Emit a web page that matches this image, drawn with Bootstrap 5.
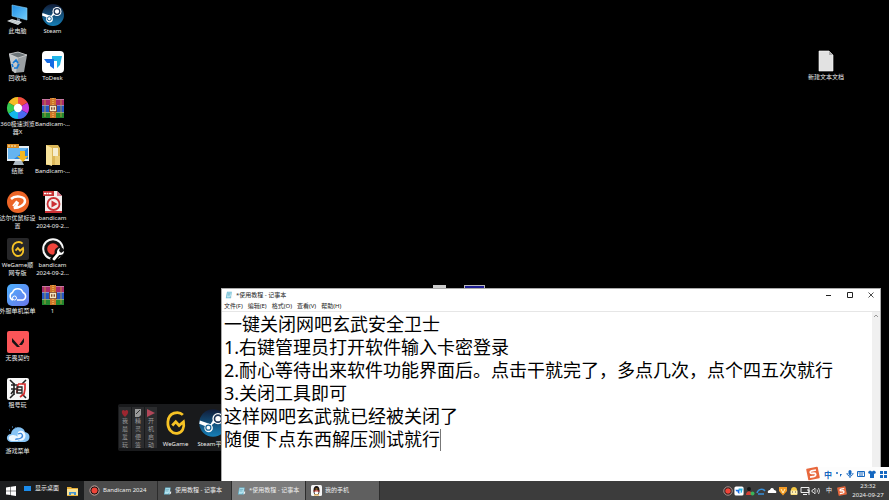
<!DOCTYPE html>
<html lang="zh-CN">
<head>
<meta charset="utf-8">
<meta name="viewport" content="width=device-width, initial-scale=1">
<title>桌面</title>
<link href="https://cdn.jsdelivr.net/npm/bootstrap@5.3.0/dist/css/bootstrap.min.css" rel="stylesheet">
<style>
  body { background: #000; color: #fff; font: 6px/7px "Noto Sans", "Noto Sans CJK SC", sans-serif; }
  svg { display: block; flex: none; }
  button { font: inherit; color: inherit; background: none; border: 0; padding: 0; }
  .desktop { min-height: 0; }
  .shortcuts { display: grid; grid-auto-flow: column; grid-template-rows: repeat(10, minmax(0, 1fr)); grid-auto-columns: 35px; height: 100%; padding: 3px 0 11px; width: max-content; }
  .shortcut { color: #eee; white-space: nowrap; line-height: 8px; text-align: center; text-decoration: none; }
  .shortcut svg { width: 24px; height: 24px; }
  .lone { top: 49px; right: 45px; }
  .dock { left: 118px; bottom: 30px; width: 160px; height: 47px; background: #191a1c; border-radius: 2px; padding: 3px 0 3px 1px; }
  .dock-tabs { gap: 1px; }
  .dock-tab { width: 12px; background: #2b2c2e; color: #999; padding: 2px 3px 0; line-height: 8px; word-break: break-all; }
  .dock .shortcut { width: 37px; }
  .dock .shortcut svg { width: 30px; height: 30px; margin: 1px 0 2px; }
  .peek { bottom: 192px; height: 4px; }
  .peek-file { left: 433px; width: 13px; background: #ccc; }
  .peek-app { left: 464px; width: 21px; background: #1c1c90; border: 1px solid #bbb; }
  .notepad { left: 221px; right: 8px; bottom: 0; height: 193px; background: #fff; color: #222; border: 1px solid #aaa; border-bottom: 0; }
  .titlebar { height: 12px; padding-left: 3px; gap: 3px; }
  .win-btn { width: 18px; height: 12px; }
  .menus { height: 10px; gap: 5px; padding-left: 2px; color: #222; }
  .editor { border-top: 1px solid #e6e6e6; }
  .editor textarea { border: 0; outline: 0; resize: none; overflow: hidden; background: #fff; color: #000; font-family: "Noto Sans", "Noto Sans CJK SC", sans-serif; font-size: 18px; line-height: 23px; padding: 1px 2px; }
  .caret { left: 218px; top: 117px; width: 1px; height: 22px; background: #777; }
  .scroller { width: 8px; background: #f0f0f0; }
  .ime { right: 0; bottom: 0; height: 14px; background: #fdfdfd; color: #1467c0; padding: 0 2px 0 18px; gap: 3px; font-size: 8px; font-weight: 700; }
  .ime-logo { left: 0; bottom: 0; }
  .taskbar { height: 19px; background: #3c3c3c; color: #eee; }
  .launch { width: 84px; background: #1d1e1f; padding-left: 6px; }
  .task { width: 74px; padding-left: 5px; gap: 3px; background: #4b4b4b; border-right: 1px solid #2c2c2c; white-space: nowrap; }
  .task.current { background: #7c7c7c; }
  .task.lit { background: #5f5f5f; }
  .tray { gap: 1px; }
  .clock { width: 42px; line-height: 9px; text-align: center; }
</style>
<script src="https://cdn.jsdelivr.net/npm/bootstrap@5.3.0/dist/js/bootstrap.bundle.min.js"></script>
</head>
<body class="vh-100 d-flex flex-column overflow-hidden">

<svg width="0" height="0" class="position-absolute" aria-hidden="true">
  <defs>
    <linearGradient id="blue" x1="0" y1="0" x2="1" y2="1"><stop stop-color="#1f8ee6"/><stop offset="1" stop-color="#72cdfa"/></linearGradient>
    <linearGradient id="navy" x1="0" y1="0" x2="0" y2="1"><stop stop-color="#101c38"/><stop offset="1" stop-color="#1680b8"/></linearGradient>
    <linearGradient id="cloudbg" x1="0" y1="0" x2="1" y2="1"><stop stop-color="#4cb1ff"/><stop offset="1" stop-color="#6a76e8"/></linearGradient>
  </defs>
  <symbol id="steam" viewBox="0 0 24 24">
    <circle cx="12" cy="12" r="11" fill="url(#navy)"/>
    <path d="M1 12.5 8.5 15.500 13 12 18 10 15 5 10 13 1.500 10z" fill="#fff"/>
    <circle cx="16" cy="8.500" r="4.500" fill="#fff"/><circle cx="16" cy="8.500" r="2.800" fill="none" stroke="#1c3557" stroke-width="1.300"/>
    <circle cx="8.500" cy="16" r="3.400" fill="#fff"/><circle cx="8.300" cy="15.700" r="2" fill="none" stroke="#1b6696"/>
  </symbol>
  <symbol id="rar" viewBox="0 0 24 24">
    <path d="M1 3h22v6H1z" fill="#a92a6a"/><path d="M1 9h22v7H1z" fill="#2456c4"/><path d="M1 16h22v6H1z" fill="#22862f"/>
    <path d="M1 3h22v1H1zM1 9h22v1H1zM1 16h22v1H1z" fill="#e7c4d8" opacity=".5"/>
    <path d="M4 4v17M20 4v17" stroke="#c9a53b" stroke-width=".8"/>
    <path d="M9 2h6v20H9z" fill="#cf762a"/><path d="M12 2v20" stroke="#f6d773" stroke-dasharray="1 1"/>
    <path d="M8 9h8v7H8z" fill="#70351b"/><path d="M9.500 10.500h5v4h-5zM12 10v5" fill="none" stroke="#f3e6c2" stroke-width="1.300"/>
  </symbol>
  <symbol id="wegame" viewBox="0 0 24 24">
    <path d="M17.500 5.500C14 2 6 3.500 5.500 11c-.4 6 3.500 10 7.500 9.300 4-.6 6-4.500 5-9.300l-3.500 3-2.700-3-2.800 3" fill="none" stroke="#f7c325" stroke-width="2.200"/>
  </symbol>
  <symbol id="note" viewBox="0 0 10 10">
    <path d="M2.500 1h6L7.500 9H1z" fill="#69b9d2"/><path d="M3 2h5l-.5 4-2 2H2z" fill="#b6e4ef"/><path d="M3 3.500h4M3 5h3" stroke="#3f8da8" stroke-width=".6"/><path d="M7 7 9 5v2.500L7.500 9z" fill="#eee"/>
  </symbol>
  <symbol id="sogou" viewBox="0 0 14 14">
    <path d="m1 3 10-2 2 10-10 2z" fill="#e8683d" stroke="#e8683d" stroke-width="1.500" stroke-linejoin="round"/>
    <path d="M10 3.500 5.500 4.300c-2 .5-1.500 2.600.2 2.500l2.500-.2c2 0 2 2.700.2 3.200L4 10.600" fill="none" stroke="#fff" stroke-width="1.700"/>
  </symbol>
  <symbol id="rec" viewBox="0 0 12 12"><circle cx="6" cy="6" r="5" fill="#141414" stroke="#d9b3ae"/><circle cx="6" cy="6" r="3.300" fill="#f04438"/></symbol>
  <symbol id="todesk" viewBox="0 0 24 24"><rect x="1" y="1" width="22" height="22" rx="4" fill="#fff"/><path d="M11 6h10l-2 9-3 3v-7h-5z" fill="#22b6e8"/><path d="M3 9h10v10l-4-3v-3H6z" fill="#156be3"/></symbol>
</svg>

<main class="desktop position-relative flex-grow-1">
  <nav class="shortcuts" aria-label="桌面图标">
    <a class="shortcut d-flex flex-column align-items-center" href="#"><svg viewBox="0 0 24 24"><path d="m6 2 15 3v12L6 13z" fill="url(#blue)" stroke="#8bd0f4" stroke-width=".6"/><path d="m11 15 3 1v3h-3z" fill="#678"/><path d="m1 18 5-2 10 3-4 3z" fill="#e4e7ea"/><path d="m3 18 10 3M5 17l9 3" stroke="#9aa" stroke-width=".6"/></svg>此电脑</a>
    <a class="shortcut d-flex flex-column align-items-center" href="#"><svg viewBox="0 0 24 24"><path d="m3 4 9-2 9 3-3 17-10 1z" fill="#9a9fa2"/><path d="m3 4 9 3-2 16-4-2z" fill="#c4c8ca"/><path d="m3 4 9-2 9 3-9 3z" fill="#6c7478" stroke="#ddd" stroke-width=".7"/><path d="m7 13 3-3 2 3m1 1-2 4H8m-1-1-1-3" fill="none" stroke="#1679d4" stroke-width="1.700"/></svg>回收站</a>
    <a class="shortcut d-flex flex-column align-items-center" href="#"><svg viewBox="0 0 24 24"><g fill="none" stroke-width="7"><path d="M12 4.500a7.500 7.500 0 0 1 6.500 3.800" stroke="#f14d3f"/><path d="M18.500 8.300a7.500 7.500 0 0 1 0 7.500" stroke="#c63adb"/><path d="M18.500 15.700A7.500 7.500 0 0 1 12 19.500" stroke="#4a69ef"/><path d="M12 19.500a7.500 7.500 0 0 1-6.500-3.800" stroke="#13b8e9"/><path d="M5.500 15.700a7.500 7.500 0 0 1 0-7.500" stroke="#34c950"/><path d="M5.500 8.300A7.500 7.500 0 0 1 12 4.500" stroke="#f6bd25"/></g><circle cx="12" cy="12" r="4.200" fill="#fff"/></svg>360极速浏览<br>器X</a>
    <a class="shortcut d-flex flex-column align-items-center" href="#"><svg viewBox="0 0 24 24"><path d="M1 3h22v15H1z" fill="#e6edf2"/><path d="M2 5h20v11H2z" fill="#2d86dd"/><path d="M2 5h20L8 16H2z" fill="#65b4f0"/><path d="M1 1h12v4H1z" fill="#d98c24"/><path d="M2 3h9" stroke="#fff2c2" stroke-dasharray="2 1"/><path d="M9 18h7l2 4H7z" fill="#abb8c2"/><path d="M14 8h5v5h3l-5 6-6-6h3z" fill="#f2b823"/></svg>结账</a>
    <a class="shortcut d-flex flex-column align-items-center" href="#"><svg viewBox="0 0 24 24"><circle cx="12" cy="12" r="11" fill="#ec6527"/><path d="M5 9c4-4 14-3 14 2 0 4-6 7-11 7 2-1 3-3 4-6" fill="none" stroke="#fff" stroke-width="2.500"/><path d="m7 16 4-5" stroke="#fff" stroke-width="2"/></svg>达尔优鼠标设<br>置</a>
    <a class="shortcut d-flex flex-column align-items-center" href="#"><svg viewBox="0 0 24 24"><rect x="1" y="1" width="22" height="22" rx="2" fill="#272729"/><use href="#wegame" x="2" y="2" width="20" height="20"/></svg>WeGame顺<br>网专版</a>
    <a class="shortcut d-flex flex-column align-items-center" href="#"><svg viewBox="0 0 24 24"><rect x="1" y="1" width="22" height="22" rx="5" fill="url(#cloudbg)"/><path d="M7 17a4 4 0 0 1-.5-7.500 5.500 5.500 0 0 1 10.500 0 4 4 0 0 1 0 7.500h-6" fill="none" stroke="#fff" stroke-width="1.500"/><circle cx="8.500" cy="15" r="2" fill="none" stroke="#fff"/></svg>外服单机菜单</a>
    <a class="shortcut d-flex flex-column align-items-center" href="#"><svg viewBox="0 0 24 24"><rect x="1" y="1" width="22" height="22" rx="2" fill="#fb5558"/><path d="m6 8 8 9h-3l-5-5zM18 8v4l-2 3h-3z" fill="#151414"/></svg>无畏契约</a>
    <a class="shortcut d-flex flex-column align-items-center" href="#"><svg viewBox="0 0 24 24"><rect x="1" y="1" width="22" height="22" rx="2" fill="#f8f8f8"/><path d="m4 3 4 4M20 3l-4 4M8 17l-4 4M16 17l4 4M5 8h6M8 6v12M5 12h6M5 17l3-4" fill="none" stroke="#222" stroke-width="1.600"/><path d="M12 7h7v5l-1 5-4 3M12 7l-1 9" fill="none" stroke="#d52d2d" stroke-width="1.700"/><path d="M11 10h5v6h-5zM11 13h5" fill="none" stroke="#222" stroke-width="1.300"/></svg>租号玩</a>
    <a class="shortcut d-flex flex-column align-items-center" href="#"><svg viewBox="0 0 24 24"><path d="M5 19C-1 18 0 11 5 11c1-8 12-9 14-2 6 1 6 9 0 10z" fill="#86c3f4"/><path d="M6 18c-5-1-4-6 1-6 4 0 6 3 5 6zM12 9c5-4 9 2 7 6s-7 3-8 1" fill="#eef8ff"/><path d="M12 11c4-2 6 2 3 4s-6 0-5 2" fill="none" stroke="#3a87db" stroke-width="1.300"/><path d="M3 7h1M6 4h1M9 5h1" stroke="#5aa5e4"/></svg>游戏菜单</a>
    <a class="shortcut d-flex flex-column align-items-center" href="#"><svg><use href="#steam"/></svg>Steam</a>
    <a class="shortcut d-flex flex-column align-items-center" href="#"><svg><use href="#todesk"/></svg>ToDesk</a>
    <a class="shortcut d-flex flex-column align-items-center" href="#"><svg><use href="#rar"/></svg>Bandicam-...</a>
    <a class="shortcut d-flex flex-column align-items-center" href="#"><svg viewBox="0 0 24 24"><path d="M5 2h12l2 3v17H5z" fill="#dcb758"/><path d="m5 2 6 3v18l-6-2z" fill="#f8e39b"/><path d="M12 5h5v8h-5z" fill="#f5edcf"/><path d="M14 13h5v9h-5z" fill="#eccd76"/></svg>Bandicam-...</a>
    <a class="shortcut d-flex flex-column align-items-center" href="#"><svg viewBox="0 0 24 24"><path d="M4 1h12l5 5v17H4z" fill="#f3eeee"/><path d="M2 1h11v5H2z" fill="#c52f31"/><path d="M3 3.500h8" stroke="#fff" stroke-width="1.500" stroke-dasharray="2 .5"/><path d="M16 1v5h5z" fill="#d78"/><circle cx="12.500" cy="14" r="6" fill="none" stroke="#cb3035" stroke-width="1.800"/><path d="m10.500 10.500 6 3.500-6 3.500z" fill="#cb3035"/><path d="M4 21h17v2H4z" fill="#cb3035"/></svg>bandicam<br>2024-09-2...</a>
    <a class="shortcut d-flex flex-column align-items-center" href="#"><svg viewBox="0 0 24 24"><circle cx="12" cy="12" r="9.800" fill="#111" stroke="#f7f7f7" stroke-width="2"/><circle cx="12" cy="12" r="5.800" fill="#f0453c"/><path d="m11 24 7-8" stroke="#000" stroke-width="6"/><circle cx="18.500" cy="15" r="5" fill="#111"/><path d="m13 22 5-6" stroke="#fff" stroke-width="2.800" stroke-linecap="round"/><path d="M19 11c-4 1-4 7 0 7 2 0 4-1 4-4l-3 2-2-2z" fill="#fff"/></svg>bandicam<br>2024-09-2...</a>
    <a class="shortcut d-flex flex-column align-items-center" href="#"><svg><use href="#rar"/></svg>1</a>
  </nav>

  <a class="shortcut lone position-absolute d-flex flex-column align-items-center" href="#"><svg viewBox="0 0 24 24"><path d="M5 2h10l4 4v16H5z" fill="#e2e2e2" stroke="#fff" stroke-width=".6"/><path d="M15 2v4h4z" fill="#aaa"/></svg>新建文本文档</a>

  <section class="dock position-absolute d-flex" aria-label="快捷栏">
    <div class="dock-tabs d-flex">
      <button class="dock-tab d-flex flex-column align-items-center" type="button"><svg width="8" height="8" viewBox="0 0 8 8"><path d="M4 8C-2 3 2-1 4 2c2-3 6 1 0 6" fill="#9c2630"/></svg>我最爱玩</button>
      <button class="dock-tab d-flex flex-column align-items-center" type="button"><svg width="8" height="8" viewBox="0 0 8 8"><path d="M1 0h6v6L5 8H1z" fill="#999"/><path d="m2 5 4-4" stroke="#333"/></svg>精灵便签</button>
      <button class="dock-tab d-flex flex-column align-items-center" type="button"><svg width="8" height="8" viewBox="0 0 8 8"><path d="m0 0 8 4-8 4z" fill="#b04759"/></svg>开机启动</button>
    </div>
    <a class="shortcut d-flex flex-column align-items-center" href="#"><svg><use href="#wegame"/></svg>WeGame</a>
    <a class="shortcut d-flex flex-column align-items-center" href="#"><svg><use href="#steam"/></svg>Steam平台</a>
  </section>

  <div class="peek peek-file position-absolute"></div>
  <div class="peek peek-app position-absolute"></div>

  <section class="notepad position-absolute d-flex flex-column" aria-label="记事本">
    <header class="titlebar d-flex align-items-center">
      <svg width="8" height="8"><use href="#note"/></svg>
      <span class="me-auto">*使用教程 - 记事本</span>
      <button class="win-btn d-flex align-items-center justify-content-center" type="button" aria-label="最小化"><svg width="6" height="6" viewBox="0 0 6 6"><path d="M0 3.500h5" stroke="#222"/></svg></button>
      <button class="win-btn d-flex align-items-center justify-content-center" type="button" aria-label="最大化"><svg width="6" height="6" viewBox="0 0 6 6"><path d="M.5.500h5v5h-5z" fill="none" stroke="#222"/></svg></button>
      <button class="win-btn d-flex align-items-center justify-content-center" type="button" aria-label="关闭"><svg width="6" height="6" viewBox="0 0 6 6"><path d="m.5.500 5 5m0-5-5 5" stroke="#222" stroke-width=".8"/></svg></button>
    </header>
    <nav class="menus d-flex align-items-center">
      <button type="button">文件(F)</button><button type="button">编辑(E)</button><button type="button">格式(O)</button><button type="button">查看(V)</button><button type="button">帮助(H)</button>
    </nav>
    <div class="editor position-relative flex-grow-1 d-flex">
      <textarea class="flex-grow-1" aria-label="文本" spellcheck="false">一键关闭网吧玄武安全卫士
1.右键管理员打开软件输入卡密登录
2.耐心等待出来软件功能界面后。点击干就完了，多点几次，点个四五次就行
3.关闭工具即可
这样网吧玄武就已经被关闭了
随便下点东西解压测试就行</textarea>
      <span class="caret position-absolute"></span>
      <div class="scroller d-flex justify-content-center"><svg width="6" height="8" viewBox="0 0 6 8"><path d="m1 5 2-2 2 2" fill="none" stroke="#999"/></svg></div>
    </div>
  </section>

  <div class="ime position-absolute d-flex align-items-center" aria-label="输入法">
    <svg class="ime-logo position-absolute" width="14" height="15"><use href="#sogou"/></svg>
    <span>中</span>
    <svg width="8" height="8" viewBox="0 0 8 8"><circle cx="2" cy="3" r="1" fill="#1467c0"/><path d="M5 4h2L5 7z" fill="#1467c0"/></svg>
    <svg width="8" height="8" viewBox="0 0 8 8"><rect x="2.500" width="3" height="5" rx="1.500" fill="#1467c0"/><path d="M1 3c0 4 6 4 6 0M4 6v2" fill="none" stroke="#1467c0"/></svg>
    <svg width="8" height="8" viewBox="0 0 8 8"><path d="M.5 1.500h7v5h-7zM1.500 3h5M2 5h4" fill="none" stroke="#1467c0"/></svg>
    <svg width="8" height="8" viewBox="0 0 8 8"><path d="m0 2 2-1.500 2 1 2-1L8 2 7 4 6 3.500V8H2V3.500L1 4z" fill="#1467c0"/></svg>
    <svg width="8" height="8" viewBox="0 0 8 8"><path d="M1 1h3v3H1zM5 1h3v3H5zM1 5h3v3H1zM5 5h3v3H5z" fill="#1467c0"/></svg>
  </div>
</main>

<footer class="taskbar d-flex flex-shrink-0">
  <div class="launch d-flex align-items-center flex-shrink-0">
    <button type="button" aria-label="开始"><svg width="10" height="10" viewBox="0 0 10 10"><path d="m0 1.500 4.500-.7v3.900H0zM5 .7 10 0v4.700H5zM0 5.200h4.500v3.900L0 8.500zM5 5.200h5V10l-5-.8z" fill="#fff"/></svg></button>
    <button class="d-flex align-items-center gap-1 ms-2 mb-1" type="button"><svg width="7" height="6" viewBox="0 0 7 6"><path d="M0 0h7v5H0z" fill="#1b8cec"/></svg>显示桌面</button>
    <button class="ms-2" type="button" aria-label="文件资源管理器"><svg width="11" height="10" viewBox="0 0 11 10"><path d="M0 1h4l1 1h6v8H0z" fill="#e5ae37"/><path d="M0 3h11v6H0z" fill="#fbe294"/><path d="M2 9V6h7v3H7V7.500H4V9z" fill="#4392cf"/></svg></button>
  </div>
  <button class="task d-flex align-items-center" type="button"><svg width="11" height="11"><use href="#rec"/></svg>Bandicam 2024</button>
  <button class="task d-flex align-items-center" type="button"><svg width="9" height="10"><use href="#note"/></svg>使用教程 - 记事本</button>
  <button class="task current d-flex align-items-center" type="button"><svg width="9" height="10"><use href="#note"/></svg>*使用教程 - 记事本</button>
  <button class="task lit d-flex align-items-center me-auto" type="button"><svg width="11" height="11" viewBox="0 0 11 11"><rect width="11" height="11" rx="1.500" fill="#f5f5f5"/><ellipse cx="5.500" cy="5.500" rx="3" ry="4.500" fill="#1c1515"/><ellipse cx="5.500" cy="7.500" rx="2" ry="2.300" fill="#fff"/><path d="M2.500 5.500h6v1h-6z" fill="#d3342b"/><path d="M3 10h5M4.500 4h2" stroke="#e9a02b"/></svg>我的手机</button>
  <div class="tray d-flex align-items-center" aria-label="通知区域">
    <svg width="10" height="10"><use href="#rec"/></svg>
    <svg width="10" height="10"><use href="#todesk"/></svg>
    <svg width="10" height="10" viewBox="0 0 10 10"><circle cx="4" cy="3" r="2" fill="#151515"/><path d="M1 9c0-5 6-5 6 0z" fill="#d43f32"/><circle cx="7.500" cy="7.500" r="2" fill="#38b45a"/></svg>
    <svg width="10" height="10" viewBox="0 0 10 10"><path d="M1 7c1-4 6-5 8-2M2 8h6" fill="none" stroke="#3990d9" stroke-width="1.500"/></svg>
    <svg width="10" height="10" viewBox="0 0 10 10"><path d="M1 7c-1-3 2-3 2-3 1-3 4-2 4 0 2 0 3 2 2 3z" fill="#fff"/></svg>
    <svg width="10" height="10" viewBox="0 0 10 10"><path d="M1 1h8v4L5 9.500 1 5z" fill="#f39a24"/><path d="m3 3 2 4 2-4" fill="none" stroke="#fff0bb"/></svg>
    <svg width="10" height="10" viewBox="0 0 10 10"><path d="M2 9V4c0-4 6-4 6 0v5z" fill="#f5c843"/><path d="M1.500 4.500h7v4h-7z" fill="#fff0b0"/><path d="M3 6h1m2 0h1" stroke="#654"/></svg>
    <svg width="10" height="10" viewBox="0 0 10 10"><path d="M1 1.500h8v5H1zM3 8.500h4M7 4h2v5" fill="none" stroke="#eee"/></svg>
    <svg width="10" height="10" viewBox="0 0 10 10"><path d="M1 4h1l2-2v6L2 6H1zM6 3.500q1 1.500 0 3M7.500 2q2 3 0 6" fill="none" stroke="#eee" stroke-width=".8"/></svg>
    <span class="ms-1">中</span>
    <svg class="ms-1" width="10" height="10"><use href="#sogou"/></svg>
  </div>
  <time class="clock d-flex flex-column justify-content-center" datetime="2024-09-27T23:32"><span>23:32</span><span>2024-09-27</span></time>
</footer>
</body>
</html>
